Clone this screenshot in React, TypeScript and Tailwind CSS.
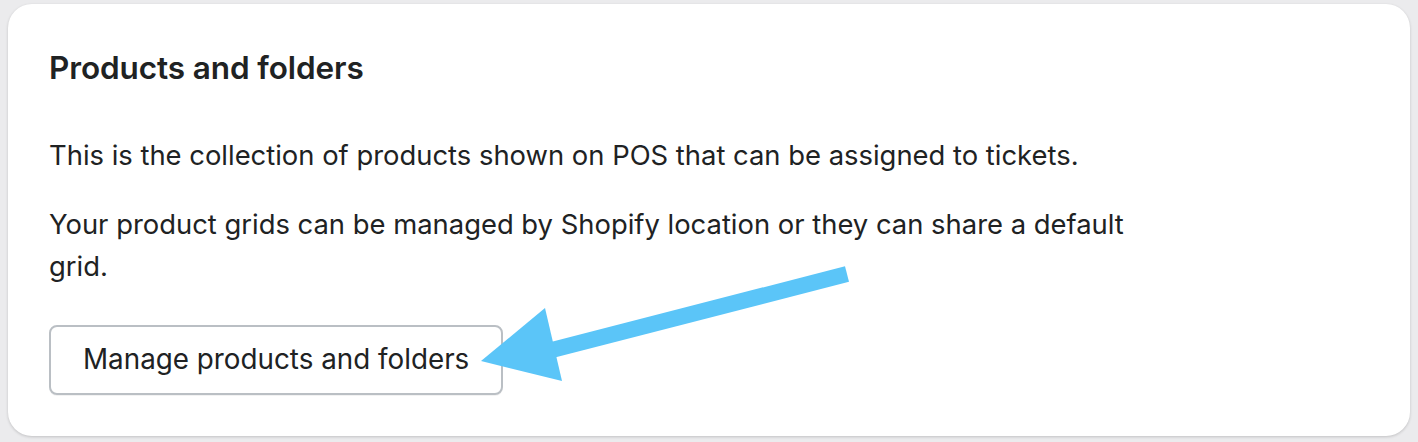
import React from 'react';

// Settings card for the POS product grid, with a callout arrow over the action button
const App: React.FC = () => {
  return (
    <div className="min-h-[442px] w-[1418px] bg-[#ebebed] px-2 pt-1 pb-[6px]" style={{ fontFamily: 'Inter, "Noto Sans", sans-serif' }}>
      <div className="relative h-[432px] rounded-[24px] bg-white px-[41px] pt-[44px] shadow-[0_1px_3px_rgba(0,0,0,0.18)]">
        <h2 className="text-[31.5px] leading-[40px] font-semibold tracking-[-0.1px] text-[#202223]">
          Products and folders
        </h2>

        <div className="mt-[46px] max-w-[1100px] text-[27.4px] leading-[42px] text-[#202223]">
          <p>This is the collection of products shown on POS that can be assigned to tickets.</p>
          <p className="mt-[27px]">
            Your product grids can be managed by Shopify location or they can share a default grid.
          </p>
        </div>

        <button className="mt-[38px] h-[70px] rounded-[8px] border-2 border-[#babfc4] bg-white px-[32px] text-[27.8px] text-[#202223] shadow-[0_1px_0_rgba(0,0,0,0.05)]">
          Manage products and folders
        </button>

        <svg
          className="pointer-events-none absolute left-0 top-0"
          width="1402"
          height="432"
          viewBox="0 0 1402 432"
        >
          <line x1="839" y1="270" x2="540" y2="347" stroke="#5bc5f8" strokeWidth="16" />
          <polygon points="473,357 537,304 554,377" fill="#5bc5f8" />
        </svg>
      </div>
    </div>
  );
};

export default App;
